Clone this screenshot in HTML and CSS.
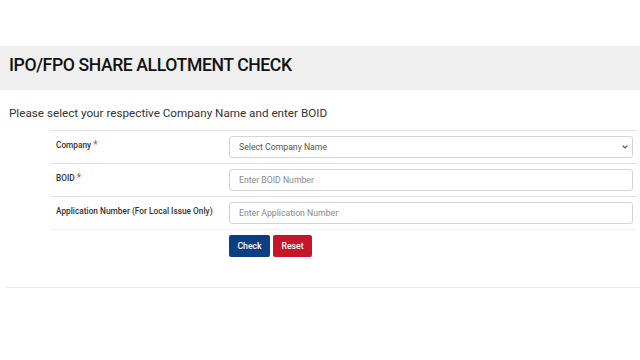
FILE: index.html
```html
<!DOCTYPE html>
<html lang="en">
<head>
    <meta charset="UTF-8">
    <meta name="viewport" content="width=device-width, initial-scale=1.0">
    <title>IPO/FPO Share Allotment Check</title>
    <link rel="stylesheet" href="styles.css">
</head>
<body>
    <div class="page-title">
        <h1>IPO/FPO SHARE ALLOTMENT CHECK</h1>
    </div>

    <p class="intro">Please select your respective Company Name and enter BOID</p>

    <table class="form-table">
        <tr>
            <td class="label">Company <span class="req">*</span></td>
            <td class="field">
                <div class="select-wrap">
                    <select class="form-control">
                        <option>Select Company Name</option>
                    </select>
                    <svg class="chevron" width="6" height="4" viewBox="0 0 6 4"><path d="M0.6 0.6 L3 3 L5.4 0.6" fill="none" stroke="#555" stroke-width="1.2"/></svg>
                </div>
            </td>
        </tr>
        <tr>
            <td class="label">BOID <span class="req">*</span></td>
            <td class="field"><input type="text" class="form-control" placeholder="Enter BOID Number"></td>
        </tr>
        <tr>
            <td class="label">Application Number (For Local Issue Only)</td>
            <td class="field"><input type="text" class="form-control" placeholder="Enter Application Number"></td>
        </tr>
        <tr class="actions">
            <td></td>
            <td class="field">
                <div class="buttons">
                    <button class="btn btn-check">Check</button>
                    <button class="btn btn-reset">Reset</button>
                </div>
            </td>
        </tr>
    </table>

    <div class="footer-line"></div>
</body>
</html>
```

FILE: styles.css
```css
* { margin: 0; padding: 0; box-sizing: border-box; }
body { font-family: Roboto, "Liberation Sans", sans-serif; background: #fff; color: #222; }
.page-title { margin-top: 46px; height: 44px; background: #efefef; padding: 5px 9px 0; }
.page-title h1 { font-size: 17.6px; font-weight: 500; line-height: 28px; color: #111; letter-spacing: -0.4px; }
.intro { margin: 15px 0 0 9px; font-size: 11.7px; line-height: 16px; color: #333; }
.form-table { margin: 9px 0 0 50px; width: 587px; border-collapse: collapse; }
.form-table tr { border-top: 1px solid #e3e3e3; }
.form-table tr.actions { border-top: 1px solid #f1f1f1; }
.label { width: 179px; padding: 8px 6px 0; vertical-align: top; font-size: 8.3px; font-weight: 500; color: #333; line-height: 12px; }
.req { color: #d9534f; font-size: 10px; }
.field { padding: 5px 4px 5px 0; }
.select-wrap { position: relative; }
.chevron { position: absolute; right: 5px; top: 9px; }
.form-control { display: block; width: 100%; height: 22px; border: 1px solid #d4d4d4; border-radius: 3px; padding: 0 9px; font-family: Roboto, "Liberation Sans", sans-serif; font-size: 8.7px; color: #555; background: #fff; }
.form-control::placeholder { color: #888; }
select.form-control { padding-left: 9px; appearance: none; -webkit-appearance: none; }
.buttons { display: flex; gap: 3px; }
.btn { height: 22px; padding: 0; border: none; border-radius: 2px; font-family: Roboto, "Liberation Sans", sans-serif; font-size: 8.7px; font-weight: 500; color: #fff; cursor: pointer; }
.btn-check { background: #0b3f83; width: 41px; }
.btn-reset { background: #c8152a; width: 39px; }
.footer-line { margin: 25px 0 0 7px; border-top: 1px solid #e8e8e8; }
```
